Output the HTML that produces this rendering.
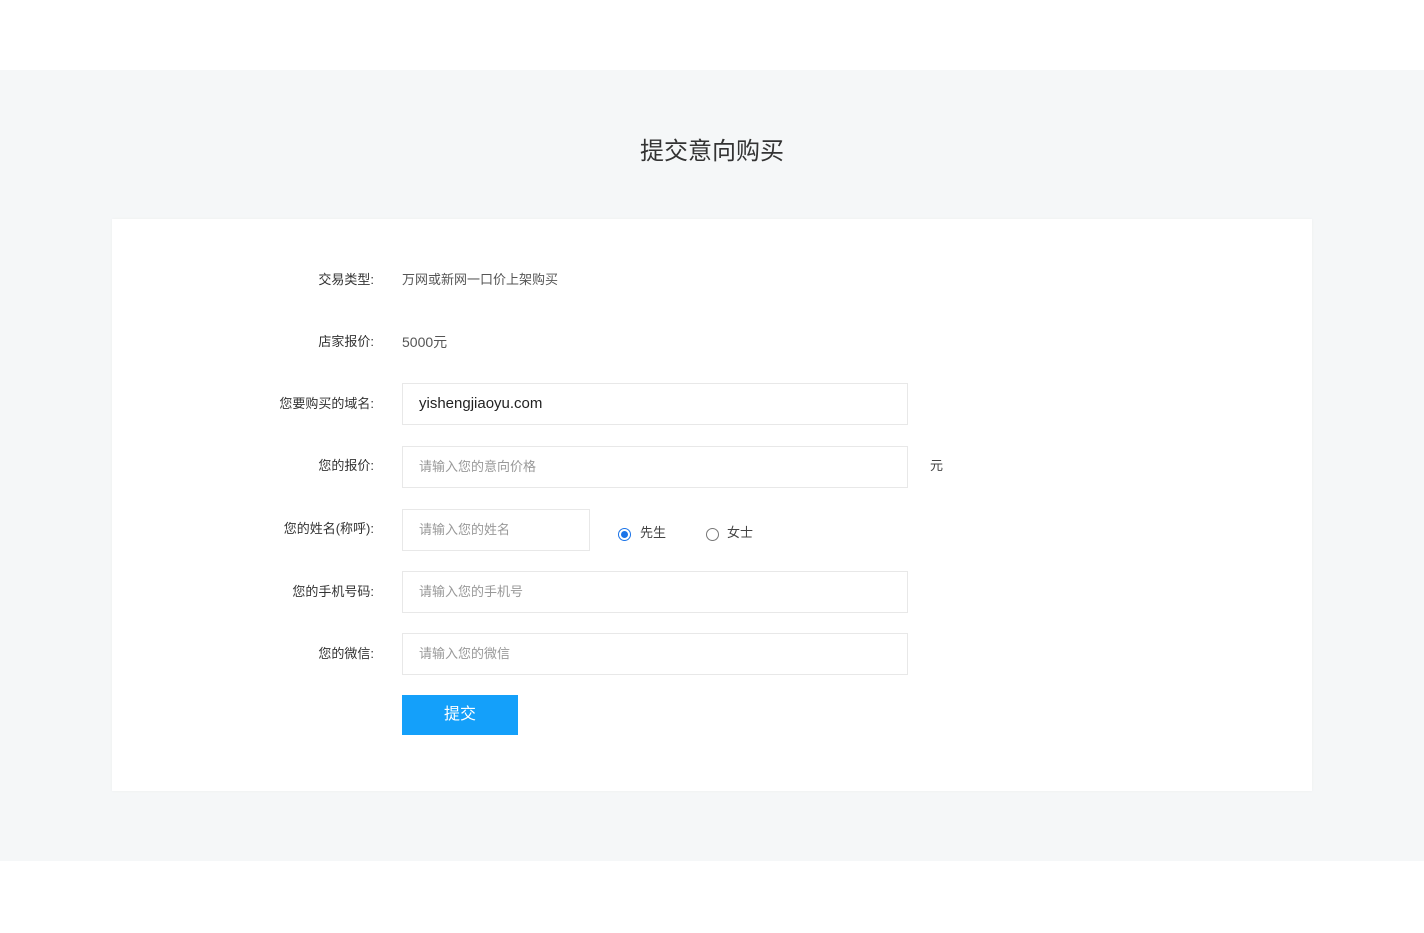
<!DOCTYPE html>
<html><head><meta charset="utf-8"><style>
*{margin:0;padding:0;box-sizing:border-box}
body{width:1424px;height:933px;background:#fff;font-family:"Liberation Sans","Noto Sans CJK SC",sans-serif;position:relative;overflow:hidden}
.band{position:absolute;left:0;top:70px;width:1424px;height:791px;background:#f5f7f8}
h1{position:absolute;left:0;width:1424px;top:136px;text-align:center;font-size:24px;font-weight:normal;color:#333;line-height:32px}
.card{position:absolute;left:112px;top:219px;width:1200px;height:572px;background:#fff;box-shadow:0 0 3px rgba(0,0,0,.04)}
.lab{position:absolute;right:1050px;width:200px;text-align:right;font-size:13px;color:#333;line-height:20px}
.val{position:absolute;left:402px;font-size:13px;color:#555;line-height:20px}
.inp{position:absolute;left:402px;width:506px;height:42px;border:1px solid #e8e8e8;background:#fff;padding-left:16px;font-size:13px;color:#999;line-height:40px}
.btn{position:absolute;left:402px;top:695px;width:116px;height:40px;background:#14a0fa;color:#fff;font-size:16px;text-align:center;line-height:40px}
.radio{position:absolute;width:13px;height:13px;border-radius:50%;border:1px solid #777;top:528px}
</style></head><body>
<div class="band"></div>
<h1>提交意向购买</h1>
<div class="card"></div>
<div class="lab" style="top:270px">交易类型:</div>
<div class="val" style="top:270px">万网或新网一口价上架购买</div>
<div class="lab" style="top:332px">店家报价:</div>
<div class="val" style="top:332px;font-size:14px">5000元</div>
<div class="lab" style="top:394px">您要购买的域名:</div>
<div class="inp" style="top:383px;color:#222;font-size:15px">yishengjiaoyu.com</div>
<div class="lab" style="top:456px">您的报价:</div>
<div class="inp" style="top:446px">请输入您的意向价格</div>
<div class="val" style="left:930px;top:456px;font-size:13px;color:#444">元</div>
<div class="lab" style="top:519px">您的姓名(称呼):</div>
<div class="inp" style="top:509px;width:188px">请输入您的姓名</div>
<div class="radio" style="left:618px;border-color:#1a73e8"><div style="position:absolute;left:2px;top:2px;width:7px;height:7px;border-radius:50%;background:#1a73e8"></div></div>
<div class="val" style="left:640px;top:523px;color:#444">先生</div>
<div class="radio" style="left:706px"></div>
<div class="val" style="left:727px;top:523px;color:#444">女士</div>
<div class="lab" style="top:582px">您的手机号码:</div>
<div class="inp" style="top:571px">请输入您的手机号</div>
<div class="lab" style="top:644px">您的微信:</div>
<div class="inp" style="top:633px">请输入您的微信</div>
<div class="btn">提交</div>
</body></html>
